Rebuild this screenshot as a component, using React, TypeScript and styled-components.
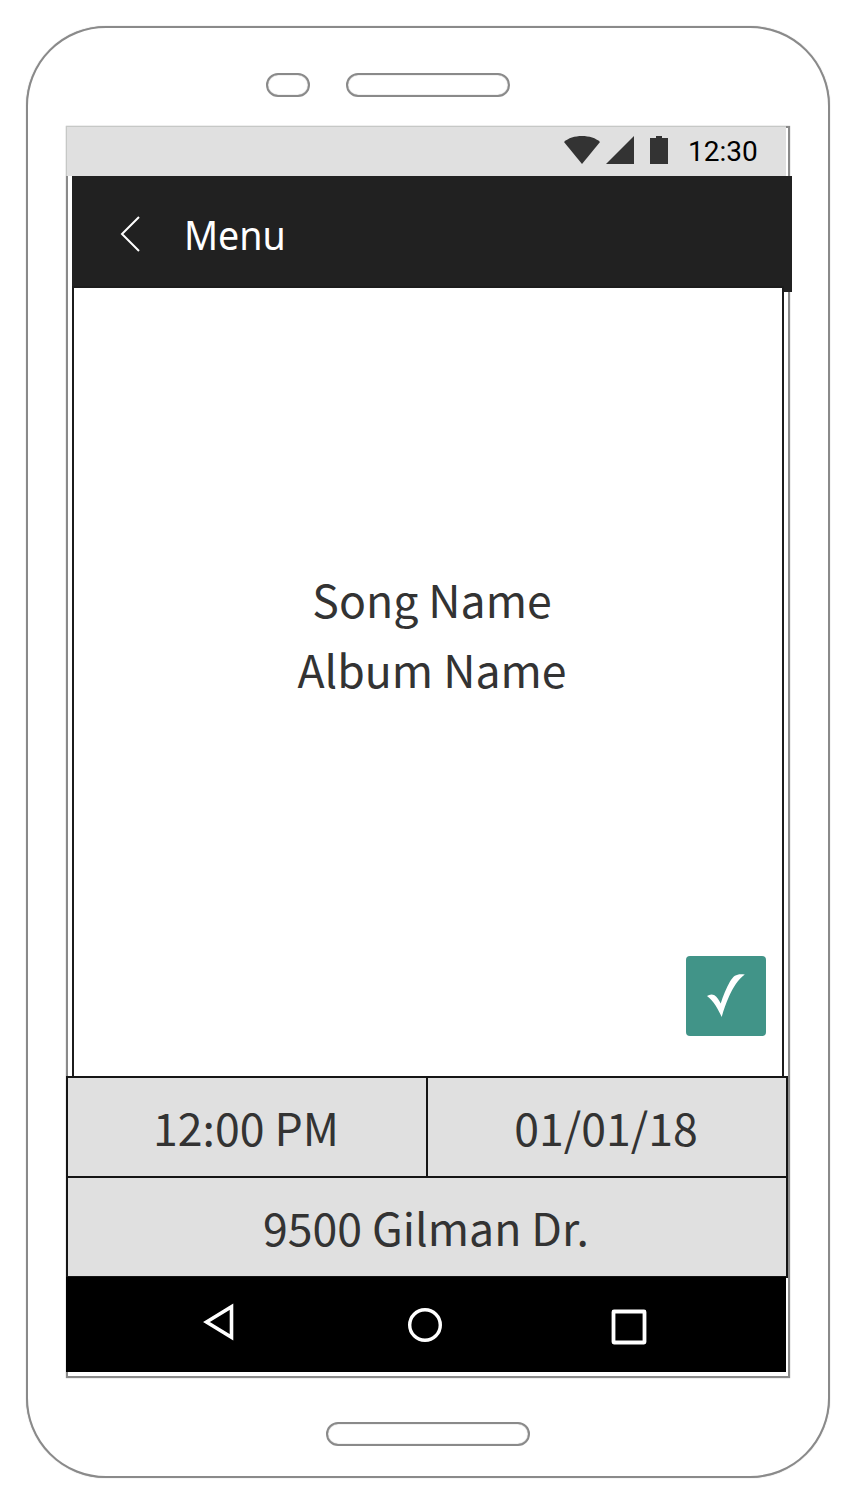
import React from "react";
import styled, { createGlobalStyle } from "styled-components";

const Global = createGlobalStyle`
  *, *::before, *::after { box-sizing: border-box; }
  body { margin: 0; background: #fff; }
`;

const Page = styled.main`
  width: 860px;
  height: 1510px;
  padding: 26px;
  background: #fff;
  overflow: hidden;
`;

const Phone = styled.div`
  display: flex;
  flex-direction: column;
  width: 804px;
  height: 1452px;
  border: 2px solid #8a8a8a;
  border-radius: 80px;
  background: #fff;
  box-shadow: 0 0 1px rgba(0, 0, 0, 0.4);
`;

const PhoneTop = styled.div`
  display: flex;
  flex: none;
  gap: 36px;
  height: 98px;
  padding: 45px 0 0 238px;
`;

const PhoneBottom = styled.div`
  padding: 44px 0 0 298px;
`;

const Slot = styled.div<{ $width: number }>`
  width: ${(p) => p.$width}px;
  height: 24px;
  border: 2px solid #8a8a8a;
  border-radius: 12px;
  box-shadow: inset 0 0 1px rgba(0, 0, 0, 0.5);
`;

const Screen = styled.div`
  flex: none;
  width: 724px;
  height: 1252px;
  margin-left: 38px;
  border: 2px solid #8a8a8a;
  box-shadow: 0 0 1px rgba(0, 0, 0, 0.4);
`;

const ScreenLayers = styled.div`
  display: flex;
  flex-direction: column;
  width: 726px;
  margin: -2px;
`;

const StatusBar = styled.div`
  display: flex;
  width: 720px;
  height: 50px;
  padding: 8px 0 0 497px;
  border-top: 1px solid #c6c8c6;
  border-left: 1px solid #c6c8c6;
  background: #e0e0e0;
`;

const Clock = styled.span`
  margin-left: 20px;
  font: 400 28px/34px Roboto, sans-serif;
  color: #000;
`;

const AppBar = styled.header`
  display: flex;
  width: 720px;
  height: 116px;
  margin-left: 6px;
  padding-left: 46px;
  background: #212121;
`;

const BackIcon = styled.svg`
  margin-top: 38px;
`;

const Title = styled.h1`
  margin: 31px 0 0 42px;
  font: 400 40px/56px "Noto Sans", sans-serif;
  color: #fff;
  transform: scaleX(0.94);
  transform-origin: left;
`;

const Content = styled.section`
  position: relative;
  display: flex;
  flex-direction: column;
  width: 712px;
  height: 792px;
  margin: -6px 0 0 6px;
  padding: 276px 16px 40px 24px;
  border: 2px solid #1c1c1c;
  background: #fff;
`;

const textStyle = `
  font-family: "Noto Sans CJK SC", sans-serif;
  font-size: 44.6px;
  color: #333;
  white-space: nowrap;
`;

const Label = styled.p`
  ${textStyle}
  margin: 0;
  line-height: 70px;
  text-align: center;
`;

const ConfirmButton = styled.button`
  display: block;
  width: 80px;
  height: 80px;
  margin: auto 0 0 auto;
  padding: 0;
  border: 0;
  border-radius: 4px;
  background: #419488;
`;

const Details = styled.section`
  position: relative;
  display: grid;
  grid-template-columns: 358px 358px;
  grid-template-rows: 98px 98px;
  gap: 2px;
  width: 722px;
  height: 202px;
  margin-top: -2px;
  border: 2px solid #151515;
  background: #151515;
`;

const Cell = styled.div<{ $wide?: boolean }>`
  ${textStyle}
  grid-column: ${(p) => (p.$wide ? "1 / -1" : "auto")};
  display: flex;
  align-items: center;
  justify-content: center;
  padding: 0 2px 2px 0;
  background: #e0e0e0;
`;

const NavBar = styled.nav`
  position: relative;
  display: flex;
  width: 720px;
  height: 95px;
  margin-top: -1px;
  padding: 24px 0 0 134px;
  gap: 164px;
  background: #000;
`;

export default function App() {
  return (
    <Page>
      <Global />
      <Phone>
        <PhoneTop>
          <Slot $width={44} />
          <Slot $width={164} />
        </PhoneTop>
        <Screen>
          <ScreenLayers>
            <StatusBar>
              <svg width="104" height="30" viewBox="0 0 104 30" fill="#333">
                <path d="M0 7C4 3 11 1 18 1C25 1 32 3 36 7L18 29Z" />
                <path d="M42 29L70 1V29Z" />
                <path d="M86 3H92V1H98V3H104V29H86Z" />
              </svg>
              <Clock>12:30</Clock>
            </StatusBar>
            <AppBar>
              <BackIcon width="24" height="40" viewBox="0 0 24 40" fill="none" stroke="#fff" strokeWidth="2">
                <path d="M21 3L4 20L21 37" />
              </BackIcon>
              <Title>Menu</Title>
            </AppBar>
            <Content>
              <Label>Song Name</Label>
              <Label>Album Name</Label>
              <ConfirmButton aria-label="Confirm">
                <svg width="80" height="80" viewBox="0 0 80 80" fill="#fff">
                  <path d="M21 40C23.500 38.300 26 37.900 28.500 39.300C31 41 33 44 34.700 47.500C37 40 40.500 31.500 44 25.500C48 18.800 51.500 17.500 58.800 18.500C52 23.500 47 31.500 43 40.500C40 47 37.800 53.500 35.700 61C32.500 54 27.500 44.500 21 40Z" />
                </svg>
              </ConfirmButton>
            </Content>
            <Details>
              <Cell>12:00 PM</Cell>
              <Cell>01/01/18</Cell>
              <Cell $wide>9500 Gilman Dr.</Cell>
            </Details>
            <NavBar>
              <svg width="40" height="44" viewBox="0 0 40 44" fill="none" stroke="#fff" strokeWidth="3.6">
                <path d="M6.500 21L31.500 5.800V36.200Z" />
              </svg>
              <svg width="40" height="44" viewBox="0 0 40 44" fill="none" stroke="#fff" strokeWidth="3.4">
                <circle cx="21" cy="24" r="15.3" />
              </svg>
              <svg width="40" height="44" viewBox="0 0 40 44" fill="none" stroke="#fff" strokeWidth="3.8">
                <rect x="5.500" y="10.500" width="31" height="31" rx="0.500" />
              </svg>
            </NavBar>
          </ScreenLayers>
        </Screen>
        <PhoneBottom>
          <Slot $width={204} />
        </PhoneBottom>
      </Phone>
    </Page>
  );
}
